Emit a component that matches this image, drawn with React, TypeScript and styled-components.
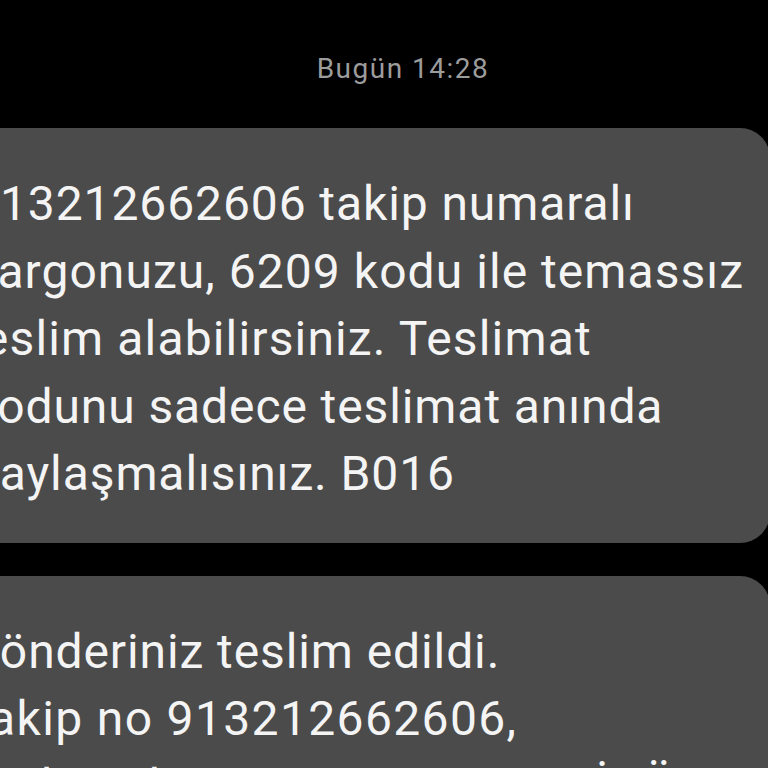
import React from "react";
import styled, { createGlobalStyle } from "styled-components";

const GlobalStyle = createGlobalStyle`
  html, body {
    margin: 0;
    padding: 0;
    background: #000;
  }
  body {
    overflow: hidden;
  }
`;

const Screen = styled.div`
  width: 768px;
  height: 768px;
  overflow: hidden;
  background: #000;
  display: flex;
  flex-direction: column;
  font-family: Roboto, "Noto Sans", sans-serif;
`;

const Stamp = styled.div`
  margin-top: 49px;
  height: 40px;
  line-height: 40px;
  padding-left: 38px;
  text-align: center;
  font-size: 28px;
  letter-spacing: 1.5px;
  color: #9c9c9c;
`;

const Thread = styled.div`
  margin-top: 39px;
  display: flex;
  flex-direction: column;
  gap: 33px;
`;

const Bubble = styled.div`
  margin-left: -60px;
  width: calc(100% + 62px);
  box-sizing: border-box;
  background: #4b4b4b;
  border-radius: 30px;
  padding: 42px 0 35px 32px;
  color: #f4f4f4;
  font-size: 48px;
  letter-spacing: 0.9px;
  line-height: 67.5px;
`;

const Line = styled.span<{ $shift?: number; $spacing?: number }>`
  display: block;
  white-space: nowrap;
  margin-left: ${(p) => p.$shift ?? 0}px;
  ${(p) => (p.$spacing !== undefined ? `letter-spacing: ${p.$spacing}px;` : "")}
`;

export default function App() {
  return (
    <>
      <GlobalStyle />
      <Screen>
        <Stamp>Bugün 14:28</Stamp>
        <Thread>
          <Bubble>
            <Line>913212662606 takip numaralı</Line>
            <Line $spacing={1.05}>kargonuzu, 6209 kodu ile temassız</Line>
            <Line $shift={-6} $spacing={1.15}>teslim alabilirsiniz. Teslimat</Line>
            <Line>kodunu sadece teslimat anında</Line>
            <Line>paylaşmalısınız. B016</Line>
          </Bubble>
          <Bubble>
            <Line>gönderiniz teslim edildi.</Line>
            <Line $spacing={1.35}>takip no 913212662606,</Line>
            <Line>teslim alan: ALICI AYŞE YENİGÜN</Line>
          </Bubble>
        </Thread>
      </Screen>
    </>
  );
}
